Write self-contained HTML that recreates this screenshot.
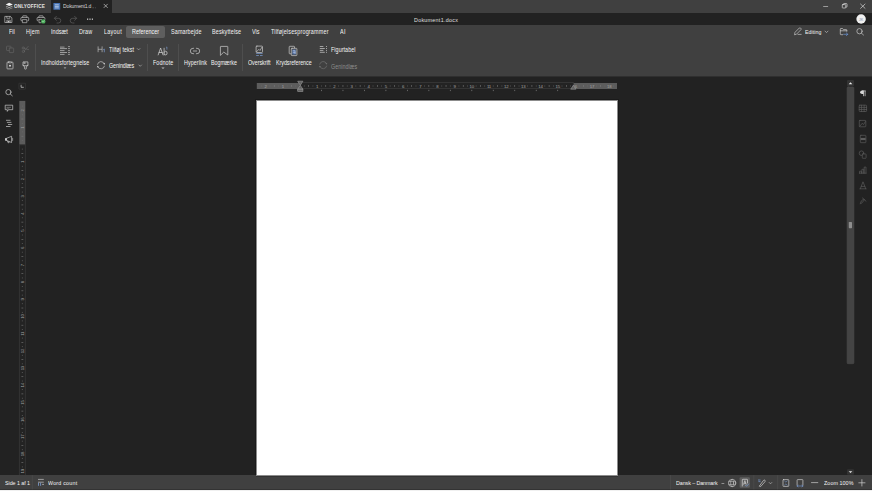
<!DOCTYPE html>
<html><head><meta charset="utf-8">
<style>
*{margin:0;padding:0;box-sizing:border-box}
html,body{width:872px;height:491px;overflow:hidden;background:#222;font-family:"Liberation Sans",sans-serif;color:#e6e6e6}
.a{position:absolute}
.t{position:absolute;white-space:nowrap;line-height:1}
svg{position:absolute;overflow:visible}
.mt{font-size:6px}
.tl{font-size:5.6px}
</style></head><body>
<!-- tab row -->
<div class="a" style="left:0;top:0;width:872px;height:13px;background:#404040"></div>
<div class="a" style="left:51px;top:0;width:61px;height:13px;background:#222"></div>
<!-- quick access row -->
<div class="a" style="left:0;top:13px;width:872px;height:12px;background:#222"></div>
<!-- toolbar -->
<div class="a" style="left:0;top:25px;width:872px;height:51px;background:#404040"></div>
<!-- canvas -->
<div class="a" style="left:0;top:76px;width:872px;height:399px;background:#222"></div>
<div class="a" style="left:0;top:76px;width:872px;height:1px;background:#2f2f2f"></div>
<!-- page -->
<div class="a" style="left:255px;top:99px;width:364px;height:380px;background:#1a1a1a"></div>
<div class="a" style="left:256px;top:100px;width:362px;height:380px;background:#8c8c8c"></div>
<div class="a" style="left:257px;top:101px;width:360px;height:380px;background:#fff"></div>
<!-- status bar -->
<div class="a" style="left:0;top:475px;width:872px;height:14px;background:#404040"></div>
<div class="a" style="left:256px;top:475px;width:362px;height:1px;background:#8c8c8c"></div>
<div class="a" style="left:256px;top:476px;width:362px;height:1px;background:#333"></div>
<div class="a" style="left:0;top:489px;width:872px;height:1px;background:#333"></div>
<div class="a" style="left:0;top:490px;width:872px;height:1px;background:#f0f0f0"></div>

<!-- RULERS -->
<svg class="a" style="left:250px;top:78px" width="375" height="17" viewBox="0 0 375 17"><rect x="6.8" y="5" width="43.2" height="6" fill="#5c5c5c"/><rect x="323.3" y="5" width="43.7" height="6" fill="#5c5c5c"/><rect x="50" y="4.5" width="273.3" height="6" fill="#232323" stroke="#3a3a3a" stroke-width="0.8"/><rect x="10.95" y="7.6" width="0.8" height="0.8" fill="#6e6e6e"/><text x="15.64" y="9.6" font-size="4.3" fill="#a4a4a4" letter-spacing="-0.15" text-anchor="middle" font-family="Liberation Sans">2</text><rect x="19.54" y="7.6" width="0.8" height="0.8" fill="#6e6e6e"/><rect x="23.93" y="7.0" width="0.6" height="1.9" fill="#7a7a7a"/><rect x="28.12" y="7.6" width="0.8" height="0.8" fill="#6e6e6e"/><text x="32.82" y="9.6" font-size="4.3" fill="#a4a4a4" letter-spacing="-0.15" text-anchor="middle" font-family="Liberation Sans">1</text><rect x="36.72" y="7.6" width="0.8" height="0.8" fill="#6e6e6e"/><rect x="41.11" y="7.0" width="0.6" height="1.9" fill="#7a7a7a"/><rect x="45.30" y="7.6" width="0.8" height="0.8" fill="#6e6e6e"/><rect x="53.90" y="7.6" width="0.8" height="0.8" fill="#6e6e6e"/><rect x="58.29" y="7.0" width="0.6" height="1.9" fill="#7a7a7a"/><rect x="62.48" y="7.6" width="0.8" height="0.8" fill="#6e6e6e"/><text x="67.18" y="9.6" font-size="4.3" fill="#a4a4a4" letter-spacing="-0.15" text-anchor="middle" font-family="Liberation Sans">1</text><rect x="71.08" y="7.6" width="0.8" height="0.8" fill="#6e6e6e"/><rect x="75.47" y="7.0" width="0.6" height="1.9" fill="#7a7a7a"/><rect x="79.66" y="7.6" width="0.8" height="0.8" fill="#6e6e6e"/><text x="84.36" y="9.6" font-size="4.3" fill="#a4a4a4" letter-spacing="-0.15" text-anchor="middle" font-family="Liberation Sans">2</text><rect x="88.25" y="7.6" width="0.8" height="0.8" fill="#6e6e6e"/><rect x="92.65" y="7.0" width="0.6" height="1.9" fill="#7a7a7a"/><rect x="96.84" y="7.6" width="0.8" height="0.8" fill="#6e6e6e"/><text x="101.54" y="9.6" font-size="4.3" fill="#a4a4a4" letter-spacing="-0.15" text-anchor="middle" font-family="Liberation Sans">3</text><rect x="105.43" y="7.6" width="0.8" height="0.8" fill="#6e6e6e"/><rect x="109.83" y="7.0" width="0.6" height="1.9" fill="#7a7a7a"/><rect x="114.03" y="7.6" width="0.8" height="0.8" fill="#6e6e6e"/><text x="118.72" y="9.6" font-size="4.3" fill="#a4a4a4" letter-spacing="-0.15" text-anchor="middle" font-family="Liberation Sans">4</text><rect x="122.61" y="7.6" width="0.8" height="0.8" fill="#6e6e6e"/><rect x="127.01" y="7.0" width="0.6" height="1.9" fill="#7a7a7a"/><rect x="131.21" y="7.6" width="0.8" height="0.8" fill="#6e6e6e"/><text x="135.90" y="9.6" font-size="4.3" fill="#a4a4a4" letter-spacing="-0.15" text-anchor="middle" font-family="Liberation Sans">5</text><rect x="139.79" y="7.6" width="0.8" height="0.8" fill="#6e6e6e"/><rect x="144.19" y="7.0" width="0.6" height="1.9" fill="#7a7a7a"/><rect x="148.38" y="7.6" width="0.8" height="0.8" fill="#6e6e6e"/><text x="153.08" y="9.6" font-size="4.3" fill="#a4a4a4" letter-spacing="-0.15" text-anchor="middle" font-family="Liberation Sans">6</text><rect x="156.97" y="7.6" width="0.8" height="0.8" fill="#6e6e6e"/><rect x="161.37" y="7.0" width="0.6" height="1.9" fill="#7a7a7a"/><rect x="165.57" y="7.6" width="0.8" height="0.8" fill="#6e6e6e"/><text x="170.26" y="9.6" font-size="4.3" fill="#a4a4a4" letter-spacing="-0.15" text-anchor="middle" font-family="Liberation Sans">7</text><rect x="174.16" y="7.6" width="0.8" height="0.8" fill="#6e6e6e"/><rect x="178.55" y="7.0" width="0.6" height="1.9" fill="#7a7a7a"/><rect x="182.74" y="7.6" width="0.8" height="0.8" fill="#6e6e6e"/><text x="187.44" y="9.6" font-size="4.3" fill="#a4a4a4" letter-spacing="-0.15" text-anchor="middle" font-family="Liberation Sans">8</text><rect x="191.34" y="7.6" width="0.8" height="0.8" fill="#6e6e6e"/><rect x="195.73" y="7.0" width="0.6" height="1.9" fill="#7a7a7a"/><rect x="199.92" y="7.6" width="0.8" height="0.8" fill="#6e6e6e"/><text x="204.62" y="9.6" font-size="4.3" fill="#a4a4a4" letter-spacing="-0.15" text-anchor="middle" font-family="Liberation Sans">9</text><rect x="208.51" y="7.6" width="0.8" height="0.8" fill="#6e6e6e"/><rect x="212.91" y="7.0" width="0.6" height="1.9" fill="#7a7a7a"/><rect x="217.10" y="7.6" width="0.8" height="0.8" fill="#6e6e6e"/><text x="221.80" y="9.6" font-size="4.3" fill="#a4a4a4" letter-spacing="-0.15" text-anchor="middle" font-family="Liberation Sans">10</text><rect x="225.70" y="7.6" width="0.8" height="0.8" fill="#6e6e6e"/><rect x="230.09" y="7.0" width="0.6" height="1.9" fill="#7a7a7a"/><rect x="234.28" y="7.6" width="0.8" height="0.8" fill="#6e6e6e"/><text x="238.98" y="9.6" font-size="4.3" fill="#a4a4a4" letter-spacing="-0.15" text-anchor="middle" font-family="Liberation Sans">11</text><rect x="242.87" y="7.6" width="0.8" height="0.8" fill="#6e6e6e"/><rect x="247.27" y="7.0" width="0.6" height="1.9" fill="#7a7a7a"/><rect x="251.47" y="7.6" width="0.8" height="0.8" fill="#6e6e6e"/><text x="256.16" y="9.6" font-size="4.3" fill="#a4a4a4" letter-spacing="-0.15" text-anchor="middle" font-family="Liberation Sans">12</text><rect x="260.06" y="7.6" width="0.8" height="0.8" fill="#6e6e6e"/><rect x="264.45" y="7.0" width="0.6" height="1.9" fill="#7a7a7a"/><rect x="268.64" y="7.6" width="0.8" height="0.8" fill="#6e6e6e"/><text x="273.34" y="9.6" font-size="4.3" fill="#a4a4a4" letter-spacing="-0.15" text-anchor="middle" font-family="Liberation Sans">13</text><rect x="277.24" y="7.6" width="0.8" height="0.8" fill="#6e6e6e"/><rect x="281.63" y="7.0" width="0.6" height="1.9" fill="#7a7a7a"/><rect x="285.83" y="7.6" width="0.8" height="0.8" fill="#6e6e6e"/><text x="290.52" y="9.6" font-size="4.3" fill="#a4a4a4" letter-spacing="-0.15" text-anchor="middle" font-family="Liberation Sans">14</text><rect x="294.42" y="7.6" width="0.8" height="0.8" fill="#6e6e6e"/><rect x="298.81" y="7.0" width="0.6" height="1.9" fill="#7a7a7a"/><rect x="303.00" y="7.6" width="0.8" height="0.8" fill="#6e6e6e"/><text x="307.70" y="9.6" font-size="4.3" fill="#a4a4a4" letter-spacing="-0.15" text-anchor="middle" font-family="Liberation Sans">15</text><rect x="311.60" y="7.6" width="0.8" height="0.8" fill="#6e6e6e"/><rect x="315.99" y="7.0" width="0.6" height="1.9" fill="#7a7a7a"/><rect x="320.19" y="7.6" width="0.8" height="0.8" fill="#6e6e6e"/><text x="324.88" y="9.6" font-size="4.3" fill="#a4a4a4" letter-spacing="-0.15" text-anchor="middle" font-family="Liberation Sans">16</text><rect x="328.77" y="7.6" width="0.8" height="0.8" fill="#6e6e6e"/><rect x="333.17" y="7.0" width="0.6" height="1.9" fill="#7a7a7a"/><rect x="337.37" y="7.6" width="0.8" height="0.8" fill="#6e6e6e"/><text x="342.06" y="9.6" font-size="4.3" fill="#a4a4a4" letter-spacing="-0.15" text-anchor="middle" font-family="Liberation Sans">17</text><rect x="345.96" y="7.6" width="0.8" height="0.8" fill="#6e6e6e"/><rect x="350.35" y="7.0" width="0.6" height="1.9" fill="#7a7a7a"/><rect x="354.54" y="7.6" width="0.8" height="0.8" fill="#6e6e6e"/><text x="359.24" y="9.6" font-size="4.3" fill="#a4a4a4" letter-spacing="-0.15" text-anchor="middle" font-family="Liberation Sans">18</text><rect x="363.13" y="7.6" width="0.8" height="0.8" fill="#6e6e6e"/><rect x="71.08" y="11.8" width="0.8" height="1.3" fill="#777"/><rect x="92.55" y="11.8" width="0.8" height="1.3" fill="#777"/><rect x="114.03" y="11.8" width="0.8" height="1.3" fill="#777"/><rect x="135.50" y="11.8" width="0.8" height="1.3" fill="#777"/><rect x="156.97" y="11.8" width="0.8" height="1.3" fill="#777"/><rect x="178.45" y="11.8" width="0.8" height="1.3" fill="#777"/><rect x="199.92" y="11.8" width="0.8" height="1.3" fill="#777"/><rect x="221.40" y="11.8" width="0.8" height="1.3" fill="#777"/><rect x="242.87" y="11.8" width="0.8" height="1.3" fill="#777"/><rect x="264.35" y="11.8" width="0.8" height="1.3" fill="#777"/><rect x="285.83" y="11.8" width="0.8" height="1.3" fill="#777"/><rect x="307.30" y="11.8" width="0.8" height="1.3" fill="#777"/><path d="M47.70000000000001,3.2 L52.90000000000001,3.2 L50.30000000000001,7.3 Z" fill="#606060" stroke="#9a9a9a" stroke-width="0.6"/><path d="M47.70000000000001,11.2 L52.90000000000001,11.2 L50.30000000000001,7.3 Z" fill="#606060" stroke="#9a9a9a" stroke-width="0.6"/><rect x="47.70000000000001" y="11.2" width="5.2" height="2.2" fill="#606060" stroke="#9a9a9a" stroke-width="0.6"/><path d="M320.69999999999993,11.2 L325.9,11.2 L323.29999999999995,7.3 Z" fill="#606060" stroke="#9a9a9a" stroke-width="0.6"/></svg>
<svg class="a" style="left:15px;top:96px;overflow:hidden" width="15" height="379" viewBox="0 0 15 379"><rect x="4.300000000000001" y="4.9" width="6" height="43.9" fill="#5c5c5c"/><rect x="4.300000000000001" y="48.8" width="6" height="335.2" fill="#232323" stroke="#383838" stroke-width="0.8"/><rect x="6.90" y="9.75" width="0.8" height="0.8" fill="#6e6e6e"/><text x="0" y="0" transform="translate(7.30,14.44) rotate(-90)" font-size="4.3" fill="#a4a4a4" letter-spacing="-0.15" text-anchor="middle" dominant-baseline="central" font-family="Liberation Sans">2</text><rect x="6.90" y="18.34" width="0.8" height="0.8" fill="#6e6e6e"/><rect x="6.40" y="22.73" width="1.9" height="0.6" fill="#7a7a7a"/><rect x="6.90" y="26.93" width="0.8" height="0.8" fill="#6e6e6e"/><text x="0" y="0" transform="translate(7.30,31.62) rotate(-90)" font-size="4.3" fill="#a4a4a4" letter-spacing="-0.15" text-anchor="middle" dominant-baseline="central" font-family="Liberation Sans">1</text><rect x="6.90" y="35.52" width="0.8" height="0.8" fill="#6e6e6e"/><rect x="6.40" y="39.91" width="1.9" height="0.6" fill="#7a7a7a"/><rect x="6.90" y="44.11" width="0.8" height="0.8" fill="#6e6e6e"/><rect x="6.90" y="52.70" width="0.8" height="0.8" fill="#6e6e6e"/><rect x="6.40" y="57.09" width="1.9" height="0.6" fill="#7a7a7a"/><rect x="6.90" y="61.29" width="0.8" height="0.8" fill="#6e6e6e"/><text x="0" y="0" transform="translate(7.30,65.98) rotate(-90)" font-size="4.3" fill="#a4a4a4" letter-spacing="-0.15" text-anchor="middle" dominant-baseline="central" font-family="Liberation Sans">1</text><rect x="6.90" y="69.88" width="0.8" height="0.8" fill="#6e6e6e"/><rect x="6.40" y="74.27" width="1.9" height="0.6" fill="#7a7a7a"/><rect x="6.90" y="78.47" width="0.8" height="0.8" fill="#6e6e6e"/><text x="0" y="0" transform="translate(7.30,83.16) rotate(-90)" font-size="4.3" fill="#a4a4a4" letter-spacing="-0.15" text-anchor="middle" dominant-baseline="central" font-family="Liberation Sans">2</text><rect x="6.90" y="87.06" width="0.8" height="0.8" fill="#6e6e6e"/><rect x="6.40" y="91.45" width="1.9" height="0.6" fill="#7a7a7a"/><rect x="6.90" y="95.65" width="0.8" height="0.8" fill="#6e6e6e"/><text x="0" y="0" transform="translate(7.30,100.34) rotate(-90)" font-size="4.3" fill="#a4a4a4" letter-spacing="-0.15" text-anchor="middle" dominant-baseline="central" font-family="Liberation Sans">3</text><rect x="6.90" y="104.24" width="0.8" height="0.8" fill="#6e6e6e"/><rect x="6.40" y="108.63" width="1.9" height="0.6" fill="#7a7a7a"/><rect x="6.90" y="112.83" width="0.8" height="0.8" fill="#6e6e6e"/><text x="0" y="0" transform="translate(7.30,117.52) rotate(-90)" font-size="4.3" fill="#a4a4a4" letter-spacing="-0.15" text-anchor="middle" dominant-baseline="central" font-family="Liberation Sans">4</text><rect x="6.90" y="121.41" width="0.8" height="0.8" fill="#6e6e6e"/><rect x="6.40" y="125.81" width="1.9" height="0.6" fill="#7a7a7a"/><rect x="6.90" y="130.01" width="0.8" height="0.8" fill="#6e6e6e"/><text x="0" y="0" transform="translate(7.30,134.70) rotate(-90)" font-size="4.3" fill="#a4a4a4" letter-spacing="-0.15" text-anchor="middle" dominant-baseline="central" font-family="Liberation Sans">5</text><rect x="6.90" y="138.59" width="0.8" height="0.8" fill="#6e6e6e"/><rect x="6.40" y="142.99" width="1.9" height="0.6" fill="#7a7a7a"/><rect x="6.90" y="147.19" width="0.8" height="0.8" fill="#6e6e6e"/><text x="0" y="0" transform="translate(7.30,151.88) rotate(-90)" font-size="4.3" fill="#a4a4a4" letter-spacing="-0.15" text-anchor="middle" dominant-baseline="central" font-family="Liberation Sans">6</text><rect x="6.90" y="155.78" width="0.8" height="0.8" fill="#6e6e6e"/><rect x="6.40" y="160.17" width="1.9" height="0.6" fill="#7a7a7a"/><rect x="6.90" y="164.36" width="0.8" height="0.8" fill="#6e6e6e"/><text x="0" y="0" transform="translate(7.30,169.06) rotate(-90)" font-size="4.3" fill="#a4a4a4" letter-spacing="-0.15" text-anchor="middle" dominant-baseline="central" font-family="Liberation Sans">7</text><rect x="6.90" y="172.96" width="0.8" height="0.8" fill="#6e6e6e"/><rect x="6.40" y="177.35" width="1.9" height="0.6" fill="#7a7a7a"/><rect x="6.90" y="181.55" width="0.8" height="0.8" fill="#6e6e6e"/><text x="0" y="0" transform="translate(7.30,186.24) rotate(-90)" font-size="4.3" fill="#a4a4a4" letter-spacing="-0.15" text-anchor="middle" dominant-baseline="central" font-family="Liberation Sans">8</text><rect x="6.90" y="190.13" width="0.8" height="0.8" fill="#6e6e6e"/><rect x="6.40" y="194.53" width="1.9" height="0.6" fill="#7a7a7a"/><rect x="6.90" y="198.72" width="0.8" height="0.8" fill="#6e6e6e"/><text x="0" y="0" transform="translate(7.30,203.42) rotate(-90)" font-size="4.3" fill="#a4a4a4" letter-spacing="-0.15" text-anchor="middle" dominant-baseline="central" font-family="Liberation Sans">9</text><rect x="6.90" y="207.32" width="0.8" height="0.8" fill="#6e6e6e"/><rect x="6.40" y="211.71" width="1.9" height="0.6" fill="#7a7a7a"/><rect x="6.90" y="215.91" width="0.8" height="0.8" fill="#6e6e6e"/><text x="0" y="0" transform="translate(7.30,220.60) rotate(-90)" font-size="4.3" fill="#a4a4a4" letter-spacing="-0.15" text-anchor="middle" dominant-baseline="central" font-family="Liberation Sans">10</text><rect x="6.90" y="224.49" width="0.8" height="0.8" fill="#6e6e6e"/><rect x="6.40" y="228.89" width="1.9" height="0.6" fill="#7a7a7a"/><rect x="6.90" y="233.09" width="0.8" height="0.8" fill="#6e6e6e"/><text x="0" y="0" transform="translate(7.30,237.78) rotate(-90)" font-size="4.3" fill="#a4a4a4" letter-spacing="-0.15" text-anchor="middle" dominant-baseline="central" font-family="Liberation Sans">11</text><rect x="6.90" y="241.68" width="0.8" height="0.8" fill="#6e6e6e"/><rect x="6.40" y="246.07" width="1.9" height="0.6" fill="#7a7a7a"/><rect x="6.90" y="250.27" width="0.8" height="0.8" fill="#6e6e6e"/><text x="0" y="0" transform="translate(7.30,254.96) rotate(-90)" font-size="4.3" fill="#a4a4a4" letter-spacing="-0.15" text-anchor="middle" dominant-baseline="central" font-family="Liberation Sans">12</text><rect x="6.90" y="258.86" width="0.8" height="0.8" fill="#6e6e6e"/><rect x="6.40" y="263.25" width="1.9" height="0.6" fill="#7a7a7a"/><rect x="6.90" y="267.45" width="0.8" height="0.8" fill="#6e6e6e"/><text x="0" y="0" transform="translate(7.30,272.14) rotate(-90)" font-size="4.3" fill="#a4a4a4" letter-spacing="-0.15" text-anchor="middle" dominant-baseline="central" font-family="Liberation Sans">13</text><rect x="6.90" y="276.04" width="0.8" height="0.8" fill="#6e6e6e"/><rect x="6.40" y="280.43" width="1.9" height="0.6" fill="#7a7a7a"/><rect x="6.90" y="284.62" width="0.8" height="0.8" fill="#6e6e6e"/><text x="0" y="0" transform="translate(7.30,289.32) rotate(-90)" font-size="4.3" fill="#a4a4a4" letter-spacing="-0.15" text-anchor="middle" dominant-baseline="central" font-family="Liberation Sans">14</text><rect x="6.90" y="293.22" width="0.8" height="0.8" fill="#6e6e6e"/><rect x="6.40" y="297.61" width="1.9" height="0.6" fill="#7a7a7a"/><rect x="6.90" y="301.81" width="0.8" height="0.8" fill="#6e6e6e"/><text x="0" y="0" transform="translate(7.30,306.50) rotate(-90)" font-size="4.3" fill="#a4a4a4" letter-spacing="-0.15" text-anchor="middle" dominant-baseline="central" font-family="Liberation Sans">15</text><rect x="6.90" y="310.40" width="0.8" height="0.8" fill="#6e6e6e"/><rect x="6.40" y="314.79" width="1.9" height="0.6" fill="#7a7a7a"/><rect x="6.90" y="318.99" width="0.8" height="0.8" fill="#6e6e6e"/><text x="0" y="0" transform="translate(7.30,323.68) rotate(-90)" font-size="4.3" fill="#a4a4a4" letter-spacing="-0.15" text-anchor="middle" dominant-baseline="central" font-family="Liberation Sans">16</text><rect x="6.90" y="327.58" width="0.8" height="0.8" fill="#6e6e6e"/><rect x="6.40" y="331.97" width="1.9" height="0.6" fill="#7a7a7a"/><rect x="6.90" y="336.17" width="0.8" height="0.8" fill="#6e6e6e"/><text x="0" y="0" transform="translate(7.30,340.86) rotate(-90)" font-size="4.3" fill="#a4a4a4" letter-spacing="-0.15" text-anchor="middle" dominant-baseline="central" font-family="Liberation Sans">17</text><rect x="6.90" y="344.76" width="0.8" height="0.8" fill="#6e6e6e"/><rect x="6.40" y="349.15" width="1.9" height="0.6" fill="#7a7a7a"/><rect x="6.90" y="353.35" width="0.8" height="0.8" fill="#6e6e6e"/><text x="0" y="0" transform="translate(7.30,358.04) rotate(-90)" font-size="4.3" fill="#a4a4a4" letter-spacing="-0.15" text-anchor="middle" dominant-baseline="central" font-family="Liberation Sans">18</text><rect x="6.90" y="361.94" width="0.8" height="0.8" fill="#6e6e6e"/><rect x="6.40" y="366.33" width="1.9" height="0.6" fill="#7a7a7a"/><rect x="6.90" y="370.53" width="0.8" height="0.8" fill="#6e6e6e"/><text x="0" y="0" transform="translate(7.30,375.22) rotate(-90)" font-size="4.3" fill="#a4a4a4" letter-spacing="-0.15" text-anchor="middle" dominant-baseline="central" font-family="Liberation Sans">19</text></svg>
<!-- /RULERS -->
<!-- menu tabs -->
<div class="a" style="left:126px;top:25.5px;width:39px;height:12.5px;background:#5e5e5e;border-radius:2px"></div>

<!-- TEXTS -->
<span class="t" style="left:8.69px;top:28.74px;font-size:6.3px;font-weight:400;letter-spacing:0.000px;color:#f4f4f4;transform:scaleX(0.86);transform-origin:0 0">Fil</span>
<span class="t" style="left:25.69px;top:28.74px;font-size:6.3px;font-weight:400;letter-spacing:0.310px;color:#f4f4f4;transform:scaleX(0.86);transform-origin:0 0">Hjem</span>
<span class="t" style="left:50.69px;top:28.74px;font-size:6.3px;font-weight:400;letter-spacing:0.070px;color:#f4f4f4;transform:scaleX(0.86);transform-origin:0 0">Indsæt</span>
<span class="t" style="left:78.68px;top:28.74px;font-size:6.3px;font-weight:400;letter-spacing:0.155px;color:#f4f4f4;transform:scaleX(0.86);transform-origin:0 0">Draw</span>
<span class="t" style="left:103.69px;top:28.74px;font-size:6.3px;font-weight:400;letter-spacing:0.326px;color:#f4f4f4;transform:scaleX(0.86);transform-origin:0 0">Layout</span>
<span class="t" style="left:131.69px;top:28.74px;font-size:6.3px;font-weight:400;letter-spacing:0.039px;color:#f8f8f8;transform:scaleX(0.86);transform-origin:0 0">Referencer</span>
<span class="t" style="left:170.69px;top:28.74px;font-size:6.3px;font-weight:400;letter-spacing:0.155px;color:#f4f4f4;transform:scaleX(0.86);transform-origin:0 0">Samarbejde</span>
<span class="t" style="left:211.69px;top:28.74px;font-size:6.3px;font-weight:400;letter-spacing:0.163px;color:#f4f4f4;transform:scaleX(0.86);transform-origin:0 0">Beskyttelse</span>
<span class="t" style="left:251.69px;top:28.74px;font-size:6.3px;font-weight:400;letter-spacing:0.058px;color:#f4f4f4;transform:scaleX(0.86);transform-origin:0 0">Vis</span>
<span class="t" style="left:270.68px;top:28.74px;font-size:6.3px;font-weight:400;letter-spacing:0.221px;color:#f4f4f4;transform:scaleX(0.86);transform-origin:0 0">Tilføjelsesprogrammer</span>
<span class="t" style="left:339.69px;top:28.74px;font-size:6.3px;font-weight:400;letter-spacing:0.349px;color:#f4f4f4;transform:scaleX(0.86);transform-origin:0 0">AI</span>
<span class="t" style="left:413.69px;top:16.76px;font-size:6.2px;font-weight:400;letter-spacing:0.349px;color:#e0e0e0;transform:scaleX(0.86);transform-origin:0 0">Dokument1.docx</span>
<span class="t" style="left:13.71px;top:3.84px;font-size:5.8px;font-weight:700;letter-spacing:0.181px;color:#e4e4e4;transform:scaleX(0.8);transform-origin:0 0">ONLYOFFICE</span>
<span class="t" style="left:62.70px;top:3.82px;font-size:5.9px;font-weight:400;letter-spacing:-0.198px;color:#d4d4d4;transform:scaleX(0.86);transform-origin:0 0">Dokument1.d</span>
<span class="t" style="left:804.70px;top:28.78px;font-size:6.1px;font-weight:400;letter-spacing:0.097px;color:#f4f4f4;transform:scaleX(0.86);transform-origin:0 0">Editing</span>
<span class="t" style="left:40.67px;top:59.70px;font-size:6.5px;font-weight:400;letter-spacing:0.122px;color:#f4f4f4;transform:scaleX(0.82);transform-origin:0 0">Indholdsfortegnelse</span>
<span class="t" style="left:108.67px;top:46.70px;font-size:6.5px;font-weight:400;letter-spacing:0.111px;color:#f4f4f4;transform:scaleX(0.82);transform-origin:0 0">Tilføj tekst</span>
<span class="t" style="left:108.68px;top:62.70px;font-size:6.5px;font-weight:400;letter-spacing:-0.107px;color:#f4f4f4;transform:scaleX(0.82);transform-origin:0 0">Genindlæs</span>
<span class="t" style="left:152.68px;top:59.70px;font-size:6.5px;font-weight:400;letter-spacing:0.142px;color:#f4f4f4;transform:scaleX(0.82);transform-origin:0 0">Fodnote</span>
<span class="t" style="left:183.67px;top:59.70px;font-size:6.5px;font-weight:400;letter-spacing:0.107px;color:#f4f4f4;transform:scaleX(0.82);transform-origin:0 0">Hyperlink</span>
<span class="t" style="left:210.68px;top:59.70px;font-size:6.5px;font-weight:400;letter-spacing:-0.035px;color:#f4f4f4;transform:scaleX(0.82);transform-origin:0 0">Bogmærke</span>
<span class="t" style="left:247.67px;top:59.70px;font-size:6.5px;font-weight:400;letter-spacing:-0.041px;color:#f4f4f4;transform:scaleX(0.82);transform-origin:0 0">Overskrift</span>
<span class="t" style="left:275.68px;top:59.70px;font-size:6.5px;font-weight:400;letter-spacing:-0.047px;color:#f4f4f4;transform:scaleX(0.82);transform-origin:0 0">Krydsreference</span>
<span class="t" style="left:330.67px;top:46.70px;font-size:6.5px;font-weight:400;letter-spacing:0.095px;color:#f4f4f4;transform:scaleX(0.82);transform-origin:0 0">Figurtabel</span>
<span class="t" style="left:330.68px;top:63.70px;font-size:6.5px;font-weight:400;letter-spacing:0.076px;color:#8c8c8c;transform:scaleX(0.82);transform-origin:0 0">Genindlæs</span>
<span class="t" style="left:4.69px;top:479.76px;font-size:6.2px;font-weight:400;letter-spacing:-0.047px;color:#f4f4f4;transform:scaleX(0.86);transform-origin:0 0">Side 1 af 1</span>
<span class="t" style="left:47.69px;top:479.76px;font-size:6.2px;font-weight:400;letter-spacing:0.258px;color:#f4f4f4;transform:scaleX(0.86);transform-origin:0 0">Word count</span>
<span class="t" style="left:675.69px;top:479.76px;font-size:6.2px;font-weight:400;letter-spacing:-0.083px;color:#f4f4f4;transform:scaleX(0.86);transform-origin:0 0">Dansk – Danmark</span>
<span class="t" style="left:823.69px;top:479.76px;font-size:6.2px;font-weight:400;letter-spacing:0.102px;color:#f4f4f4;transform:scaleX(0.86);transform-origin:0 0">Zoom 100%</span>
<!-- /TEXTS -->

<!-- tab texts -->
<!-- title -->

<!-- toolbar labels -->

<!-- separators -->
<div class="a" style="left:35px;top:44px;width:1px;height:27px;background:#4e4e4e"></div>
<div class="a" style="left:147px;top:44px;width:1px;height:27px;background:#4e4e4e"></div>
<div class="a" style="left:178px;top:44px;width:1px;height:27px;background:#4e4e4e"></div>
<div class="a" style="left:242px;top:44px;width:1px;height:27px;background:#4e4e4e"></div>

<!-- status bar -->

<!-- ICONS -->
<svg class="a" style="left:0;top:0" width="872" height="491" viewBox="0 0 872 491" fill="none" stroke-linecap="round" stroke-linejoin="round">
<!-- ONLYOFFICE logo -->
<g>
<path d="M9.2,2.8 L12.8,4.4 L9.2,6.0 L5.7,4.4 Z" fill="#f4f4f4"/>
<path d="M6.3,5.9 L9.2,7.2 L12.1,5.9 L12.8,6.3 L9.2,7.9 L5.7,6.3 Z" fill="#c8c8c8"/>
<path d="M6.3,7.6 L9.2,8.9 L12.1,7.6 L12.8,8.0 L9.2,9.6 L5.7,8.0 Z" fill="#9a9a9a"/>
</g>
<!-- doc tab icon -->
<rect x="53.4" y="2.9" width="6.8" height="6.9" rx="0.6" fill="#4773b3"/>
<path d="M54.8,4.8 H58.8 M54.8,6.35 H58.8 M54.8,7.9 H58.8" stroke="#dfe8f5" stroke-width="0.68" stroke-linecap="butt"/>
<rect x="92.6" y="7.2" width="1" height="1.1" fill="#666"/><rect x="94.9" y="7.2" width="1" height="1.1" fill="#4a4a4a"/>
<!-- tab close -->
<path d="M104,4.2 L107.4,7.6 M107.4,4.2 L104,7.6" stroke="#c8c8c8" stroke-width="0.7"/>
<!-- window controls -->
<path d="M823.2,6.5 H828.1" stroke="#d8d8d8" stroke-width="0.6" stroke-linecap="butt"/>
<rect x="842.3" y="4.6" width="3.5" height="3.4" rx="0.5" stroke="#d8d8d8" stroke-width="0.7"/>
<path d="M843.4,4.6 V4.2 Q843.4,3.5 844.1,3.5 H846.3 Q847,3.5 847,4.2 V6.5 Q847,7.1 846.3,7.1 H845.8" stroke="#d8d8d8" stroke-width="0.7"/>
<path d="M860.6,4.1 L865,8.3 M865,4.1 L860.6,8.3" stroke="#d8d8d8" stroke-width="0.7"/>
<!-- quick access: save -->
<path d="M5.2,16.4 H10.4 L11.9,17.9 V22.5 H5.2 Z" stroke="#c8c8c8" stroke-width="0.65"/>
<path d="M6.8,16.5 V18.3 H9.9 V16.5" stroke="#c8c8c8" stroke-width="0.6"/>
<path d="M6.8,22.4 V20.2 H10.3 V22.4" stroke="#c8c8c8" stroke-width="0.6"/>
<rect x="7.6" y="21" width="1.9" height="1.4" fill="#c8c8c8"/>
<!-- print -->
<path d="M21.7,20.9 Q20.9,20.9 20.9,20.1 V18.3 Q20.9,17.4 21.8,17.4 H27.8 Q28.7,17.4 28.7,18.3 V20.1 Q28.7,20.9 27.9,20.9" stroke="#c8c8c8" stroke-width="0.68"/>
<path d="M22.7,17.3 V16.3 Q22.7,15.8 23.2,15.8 H26.4 Q26.9,15.8 26.9,16.3 V17.3" stroke="#c8c8c8" stroke-width="0.65"/>
<rect x="22.8" y="19.6" width="4" height="3.1" stroke="#c8c8c8" stroke-width="0.65"/>
<!-- quick print -->
<path d="M37.9,20.9 Q37.1,20.9 37.1,20.1 V18.3 Q37.1,17.4 38,17.4 H44 Q44.9,17.4 44.9,18.3 V19.3" stroke="#c8c8c8" stroke-width="0.68"/>
<path d="M38.9,17.3 V16.3 Q38.9,15.8 39.4,15.8 H42.6 Q43.1,15.8 43.1,16.3 V17.3" stroke="#c8c8c8" stroke-width="0.65"/>
<path d="M39,19.6 H41.6 M39,19.6 V22.7 H41" stroke="#c8c8c8" stroke-width="0.65"/>
<circle cx="43.3" cy="21.4" r="2.2" fill="#4caf5c"/>
<path d="M42.4,21.4 L43.1,22.1 L44.3,20.8" stroke="#d6f0da" stroke-width="0.45"/>
<!-- undo / redo -->
<path d="M54.6,18.3 H58.3 Q60.8,18.3 60.8,20.7 Q60.8,23 58.3,23 H57" stroke="#5e5e5e" stroke-width="0.7"/>
<path d="M56.4,16.3 L54.4,18.3 L56.4,20.3" stroke="#5e5e5e" stroke-width="0.7"/>
<path d="M76.4,18.3 H72.7 Q70.2,18.3 70.2,20.7 Q70.2,23 72.7,23 H74" stroke="#5e5e5e" stroke-width="0.7"/>
<path d="M74.6,16.3 L76.6,18.3 L74.6,20.3" stroke="#5e5e5e" stroke-width="0.7"/>
<!-- more -->
<rect x="87" y="18.5" width="1.2" height="1.4" fill="#c0c0c0"/>
<rect x="89.4" y="18.5" width="1.2" height="1.4" fill="#c0c0c0"/>
<rect x="91.8" y="18.5" width="1.2" height="1.4" fill="#c0c0c0"/>
<!-- avatar -->
<circle cx="861.1" cy="19" r="4.75" fill="#f0f0f0"/>
<text x="861.1" y="20.6" font-size="3.9" font-family="Liberation Sans" fill="#8490a8" text-anchor="middle" stroke="none">JK</text>
<!-- edit pen -->
<path d="M794.6,34.4 L795,32.3 L799.3,28 Q800,27.5 800.6,28.1 L801,28.5 Q801.4,29.1 800.9,29.7 L796.7,34 Z" stroke="#d0d0d0" stroke-width="0.65"/>
<path d="M798,34.4 H801.2" stroke="#d0d0d0" stroke-width="0.65"/>
<path d="M825,31.1 L826.5,32.6 L828,31.1" stroke="#c8c8c8" stroke-width="0.65"/>
<!-- folder -->
<path d="M846.8,31.2 V30.1 Q846.8,29.6 846.3,29.6 H843.5 L842.5,28.5 H840.9 Q840.3,28.5 840.3,29.1 V34.1 Q840.3,34.7 840.9,34.7 H842.6" stroke="#d0d0d0" stroke-width="0.68"/>
<path d="M840.4,30.8 H846.8" stroke="#d0d0d0" stroke-width="0.7"/>
<path d="M843.6,34.3 H847.8 M846.4,33 L847.8,34.3 L846.4,35.6" stroke="#6e9ae0" stroke-width="0.65"/>
<!-- search top right -->
<circle cx="859.5" cy="31.2" r="2.65" stroke="#d0d0d0" stroke-width="0.68"/>
<path d="M861.4,33.1 L863.5,35" stroke="#d0d0d0" stroke-width="0.68"/>
</svg>
<!-- /ICONS -->
<!-- ICONS2 -->
<svg class="a" style="left:0;top:0" width="872" height="491" viewBox="0 0 872 491" fill="none" stroke-linecap="round" stroke-linejoin="round">
<!-- copy (disabled) -->
<path d="M11,47.6 V46.8 Q11,46.2 10.4,46.2 H7.1 Q6.5,46.2 6.5,46.8 V49.9 Q6.5,50.5 7.1,50.5 H9.1" stroke="#686868" stroke-width="0.6"/>
<rect x="9.3" y="48" width="4.4" height="4.6" rx="0.6" stroke="#686868" stroke-width="0.6"/>
<!-- cut (disabled) -->
<circle cx="23.2" cy="48" r="1.1" stroke="#686868" stroke-width="0.6"/>
<circle cx="23.4" cy="51.5" r="1.1" stroke="#686868" stroke-width="0.6"/>
<path d="M24.2,48.6 L28.6,49.6 M24.3,50.8 L28.2,46.4" stroke="#686868" stroke-width="0.6"/>
<!-- paste -->
<path d="M8.6,62.2 H7.5 Q7,62.2 7,62.8 V68.3 Q7,68.9 7.6,68.9 H12.4 Q13,68.9 13,68.3 V62.8 Q13,62.2 12.5,62.2 H11.4" stroke="#d0d0d0" stroke-width="0.7"/>
<rect x="8.5" y="61.8" width="3" height="1.1" rx="0.3" stroke="#d0d0d0" stroke-width="0.6"/>
<rect x="9" y="64.9" width="2" height="1.6" fill="#d0d0d0"/>
<!-- format painter -->
<path d="M23,65.3 V61.9 H27.9 V65.3 Z" stroke="#d0d0d0" stroke-width="0.7"/>
<path d="M23.6,62.5 H25.5 V63.6 H23.6 Z" fill="#d0d0d0"/>
<path d="M23,65.3 L24.6,66.6 V68.6 Q24.6,69.1 25.1,69.1 H25.8 Q26.3,69.1 26.3,68.6 V66.6 L27.9,65.3" stroke="#d0d0d0" stroke-width="0.7"/>
<!-- TOC -->
<g stroke="#cfcfcf" stroke-width="0.65" stroke-linecap="butt">
<path d="M60,47.1 H64.5 M60,48.6 H67 M60,50.6 H64.5 M60,52.5 H67 M60,54.4 H64.5"/>
<path d="M68.1,46.6 H69.9 M68.1,48.6 H69.9 M68.1,50.6 H69.9 M68.1,52.5 H69.9 M68.1,54.4 H69.9"/>
</g>
<path d="M63.6,67.4 L65,68.8 L66.4,67.4 Z" fill="#bbb"/>
<!-- H1 -->
<path d="M98.1,46.4 V52.2 M102.1,46.4 V52.2 M98.1,49.3 H102.1" stroke="#d0d0d0" stroke-width="0.6" stroke-linecap="butt"/>
<path d="M103.3,49.6 L104.3,49 V52.3" stroke="#7d9fd6" stroke-width="0.68" stroke-linecap="butt"/>
<path d="M137.3,48.6 L138.6,49.9 L139.9,48.6" stroke="#c0c0c0" stroke-width="0.6"/>
<!-- refresh -->
<path d="M97.52,64.27 A3.6,3.6 0 0 1 104.26,63.68" stroke="#cdcdcd" stroke-width="0.65"/><path d="M104.48,66.13 A3.6,3.6 0 0 1 97.74,66.72" stroke="#cdcdcd" stroke-width="0.65"/><path d="M104.71,64.63 L103.08,63.74 L105.07,62.81 Z" fill="#cdcdcd"/><path d="M97.29,65.77 L98.92,66.66 L96.93,67.59 Z" fill="#cdcdcd"/>
<path d="M138.9,65 L140.2,66.3 L141.5,65" stroke="#c0c0c0" stroke-width="0.6"/>
<!-- footnote -->
<path d="M158.2,54.9 L160.6,48 L163,54.9 M159.1,52.5 H162.1" stroke="#d8d8d8" stroke-width="0.7"/>
<path d="M164.1,48.2 V54.9" stroke="#d8d8d8" stroke-width="0.7"/>
<path d="M164.1,52.4 Q164.6,51.2 165.6,51.2 Q167.1,51.2 167.1,53.1 Q167.1,54.9 165.6,54.9 Q164.6,54.9 164.1,53.9" stroke="#d8d8d8" stroke-width="0.7"/>
<path d="M166.2,47.4 L166.9,46.9 V49.6" stroke="#7d9fd6" stroke-width="0.6" stroke-linecap="butt"/>
<path d="M161.4,67.5 L163,69 L164.6,67.5 Z" fill="#bbb"/>
<!-- hyperlink -->
<path d="M193.6,48.3 H193 A2.7,2.7 0 0 0 193,53.7 H193.6 M196.4,48.3 H197 A2.7,2.7 0 0 1 197,53.7 H196.4" stroke="#d0d0d0" stroke-width="0.68"/>
<path d="M193.4,51 H196.6" stroke="#d0d0d0" stroke-width="0.68"/>
<!-- bookmark -->
<path d="M220.4,55 V46.8 Q220.4,46.4 220.8,46.4 H227.4 Q227.8,46.4 227.8,46.8 V55 L224.1,52.3 Z" stroke="#d0d0d0" stroke-width="0.7"/>
<!-- caption -->
<rect x="256.1" y="46.1" width="6.4" height="6.4" rx="0.8" stroke="#d0d0d0" stroke-width="0.68"/>
<path d="M256.5,51.8 L258.8,49.3 L260,50.5 L261.9,47.2" stroke="#d0d0d0" stroke-width="0.65"/>
<path d="M256.2,53.5 H262.6 M256.2,55.5 H258.9 M260,55.5 H262.6" stroke="#7d9fd6" stroke-width="0.7" stroke-linecap="butt"/>
<!-- cross reference -->
<path d="M294.5,47.9 V46.9 Q294.5,46.3 293.9,46.3 H289.8 Q289.2,46.3 289.2,46.9 V53.2 Q289.2,53.8 289.8,53.8 H290.8" stroke="#d0d0d0" stroke-width="0.68"/>
<rect x="291.3" y="48.3" width="5.6" height="7.3" rx="0.7" stroke="#d0d0d0" stroke-width="0.68"/>
<rect x="292.3" y="49.5" width="3.6" height="5" fill="#5a77a8"/>
<path d="M293.2,50.7 H295 V53.6 M293.2,52.4 H295" stroke="#cdd9ee" stroke-width="0.5"/>
<!-- figure table -->
<g stroke="#cfcfcf" stroke-width="0.7" stroke-linecap="butt">
<path d="M319.8,46.5 H323.4 M319.8,48.5 H324.8 M319.8,50.4 H323.4 M319.8,52.3 H324.8"/>
<path d="M326,46.5 H327 M326,48.5 H327 M326,50.4 H327 M326,52.3 H327"/>
</g>
<!-- refresh disabled -->
<path d="M319.72,64.17 A3.6,3.6 0 0 1 326.46,63.58" stroke="#727272" stroke-width="0.65"/><path d="M326.68,66.03 A3.6,3.6 0 0 1 319.94,66.62" stroke="#727272" stroke-width="0.65"/><path d="M326.91,64.53 L325.28,63.64 L327.27,62.71 Z" fill="#727272"/><path d="M319.49,65.67 L321.12,66.56 L319.13,67.49 Z" fill="#727272"/>
</svg>
<!-- /ICONS2 -->
<!-- ICONS3 -->
<svg class="a" style="left:0;top:0" width="872" height="491" viewBox="0 0 872 491" fill="none" stroke-linecap="round" stroke-linejoin="round">
<!-- left sidebar: search -->
<circle cx="8.4" cy="92.1" r="2.6" stroke="#cfcfcf" stroke-width="0.68"/>
<path d="M10.3,94 L12.3,95.8" stroke="#cfcfcf" stroke-width="0.68"/>
<!-- comment -->
<path d="M5.6,105.2 H12.7 V109.7 H8.3 L7.3,111.4 V109.7 H5.6 Z" stroke="#cfcfcf" stroke-width="0.68"/>
<path d="M6.9,107.3 H10.6" stroke="#9a9a9a" stroke-width="0.6"/>
<path d="M6.9,108.3 H9" stroke="#9a9a9a" stroke-width="0.5"/>
<!-- navigation -->
<path d="M6,120.3 H10.5 M6.9,122.4 H11.4 M8,124.5 H12.2 M6,126.5 H10.5" stroke="#cfcfcf" stroke-width="0.68" stroke-linecap="butt"/>
<!-- megaphone -->
<path d="M6.6,138.3 L11.6,136.3 V142.5 L6.6,140.5 Z" stroke="#cfcfcf" stroke-width="0.68"/>
<rect x="5" y="138.2" width="1.9" height="2.4" fill="#cfcfcf"/>
<path d="M7.4,140.9 L8,142.7 H9.1 L8.8,141.3" stroke="#cfcfcf" stroke-width="0.6"/>
<path d="M12.6,138.3 V140.5" stroke="#cfcfcf" stroke-width="0.55"/>
<!-- ruler corner -->
<rect x="19.3" y="83.2" width="6.1" height="6" fill="#232323" stroke="#3a3a3a" stroke-width="0.6"/>
<path d="M21.1,84.8 V87.3 H23.8" stroke="#e0e0e0" stroke-width="0.65" stroke-linecap="butt"/>
<!-- scrollbar -->
<rect x="847" y="80" width="7" height="6.2" rx="1" fill="#333"/>
<path d="M848.7,84.2 L850.5,82.3 L852.3,84.2 Z" fill="#f0f0f0"/>
<rect x="847.1" y="87" width="6.8" height="276.7" rx="1" fill="#444" stroke="#4c4c4c" stroke-width="0.6"/>
<rect x="848.8" y="222" width="3.2" height="6.2" rx="0.6" fill="#8e8e8e"/>
<rect x="847" y="469.3" width="7" height="5.5" rx="1" fill="#333"/>
<path d="M848.7,471.2 L850.5,473.1 L852.3,471.2 Z" fill="#f0f0f0"/>
<!-- right sidebar -->
<path d="M863.5,90.9 V96.2 M865.1,90.9 V96.2 M861.9,90.9 H865.7" stroke="#d8d8d8" stroke-width="0.7" stroke-linecap="butt"/>
<path d="M863.6,90.6 H862.1 Q860.1,90.6 860.1,92.3 Q860.1,94.1 862.1,94.1 H863.6 Z" fill="#d8d8d8"/>
<g stroke="#5e5e5e" stroke-width="0.65">
<rect x="859.2" y="105.2" width="7.4" height="6.3" rx="0.6"/>
<path d="M859.2,107.4 H866.6 M859.2,109.5 H866.6 M861.6,105.2 V111.5 M864.1,105.2 V111.5"/>
<rect x="859.3" y="120.4" width="6.5" height="6.4" rx="0.6"/>
<path d="M859.8,126.2 L862.2,123.3 L863.5,124.6 L865.4,121.6"/>
<rect x="860.3" y="135.3" width="5.6" height="7.4" rx="0.6"/>
<rect x="860.6" y="137.9" width="5" height="2.2" fill="#5e5e5e" stroke="none"/>
<circle cx="861.5" cy="153.2" r="2.3"/>
<rect x="862.3" y="154" width="3.8" height="4.3" rx="0.5" fill="#222"/>
<path d="M859.3,173.2 H866.1 M859.6,173.2 V171.2 H861.4 V173.2 M861.9,173.2 V169.3 H863.7 V173.2 M864.2,173.2 V167.1 H866 V173.2"/>
<path d="M860.3,188.8 L863,181.8 L865.8,188.8 M861.3,186.4 H864.8 M859.9,188.8 H866"/>
<path d="M860.2,203.8 Q861,200 863.4,199.3 Q865.2,198.8 863.6,200.9 L861.3,203.5 M862.5,198 L866,201.2"/>
</g>
<!-- status bar: word count icon -->
<path d="M38,479.4 H43.8 M38,482.2 H43.8" stroke="#cfcfcf" stroke-width="0.65" stroke-linecap="butt"/>
<path d="M38.5,482.8 V485.8 M40.6,482.8 V485.8" stroke="#7d9fd6" stroke-width="0.8" stroke-linecap="butt"/>
<path d="M42.1,484.4 H44" stroke="#cfcfcf" stroke-width="0.65" stroke-linecap="butt"/>
<!-- separators -->
<path d="M32.3,475.5 V489" stroke="#4e4e4e" stroke-width="0.68"/>
<path d="M670.5,475.5 V489 M753.8,475.5 V489 M777.7,475.5 V489" stroke="#4e4e4e" stroke-width="0.68"/>
<!-- lang chevron -->
<path d="M721.9,483.5 H723.9" stroke="#c8c8c8" stroke-width="0.6"/>
<!-- globe -->
<circle cx="732.1" cy="483" r="3.65" stroke="#d8d8d8" stroke-width="0.6"/>
<ellipse cx="732.1" cy="483" rx="1.5" ry="3.65" stroke="#d8d8d8" stroke-width="0.5"/>
<path d="M728.8,481.6 H735.4 M728.8,484.4 H735.4" stroke="#d8d8d8" stroke-width="0.5"/>
<!-- spell button -->
<rect x="739.6" y="477.3" width="10.3" height="10.5" rx="1" fill="#5e5e5e"/>
<path d="M742.3,486 V480 Q742.3,479.3 743,479.3 H747 Q747.5,479.3 747.5,480 V483" stroke="#e0e0e0" stroke-width="0.65"/>
<path d="M743.7,484.3 L744.9,480.6 L746.1,484.3 M744.1,483.2 H745.7" stroke="#e0e0e0" stroke-width="0.6"/>
<path d="M745.5,485.3 L746.5,486.3 L748.6,484" stroke="#7d9fd6" stroke-width="0.7"/>
<!-- track changes -->
<path d="M758,480 H760.5 M758.4,481.6 H760.5" stroke="#7d9fd6" stroke-width="0.7" stroke-linecap="butt"/>
<path d="M759.5,485.9 L763.4,480.5 Q764.2,479.6 765,480.3 Q765.6,481 764.9,481.8 L760.9,486.3 Z" stroke="#d8d8d8" stroke-width="0.65"/>
<path d="M769.2,482.5 L770.5,483.8 L771.8,482.5" stroke="#c8c8c8" stroke-width="0.6"/>
<!-- fit page -->
<rect x="783" y="479.6" width="5.8" height="6.8" rx="0.6" stroke="#d8d8d8" stroke-width="0.65"/>
<path d="M784.5,480.9 L785.9,482.1 L787.3,480.9 M784.5,485.1 L785.9,483.9 L787.3,485.1" stroke="#7d9fd6" stroke-width="0.55"/>
<!-- fit width -->
<path d="M797.1,485 V480.2 Q797.1,479.6 797.7,479.6 H802.3 Q802.9,479.6 802.9,480.2 V485" stroke="#d8d8d8" stroke-width="0.65"/>
<path d="M797,486 H803 M798,485.2 L797,486 L798,486.8 M802,485.2 L803,486 L802,486.8" stroke="#7d9fd6" stroke-width="0.6"/>
<!-- zoom minus plus -->
<path d="M811.5,482.6 H817.8" stroke="#d8d8d8" stroke-width="0.65"/>
<path d="M858.8,482.8 H865 M861.9,479.6 V486" stroke="#d8d8d8" stroke-width="0.65"/>
</svg>
<!-- /ICONS3 -->
</body></html>
